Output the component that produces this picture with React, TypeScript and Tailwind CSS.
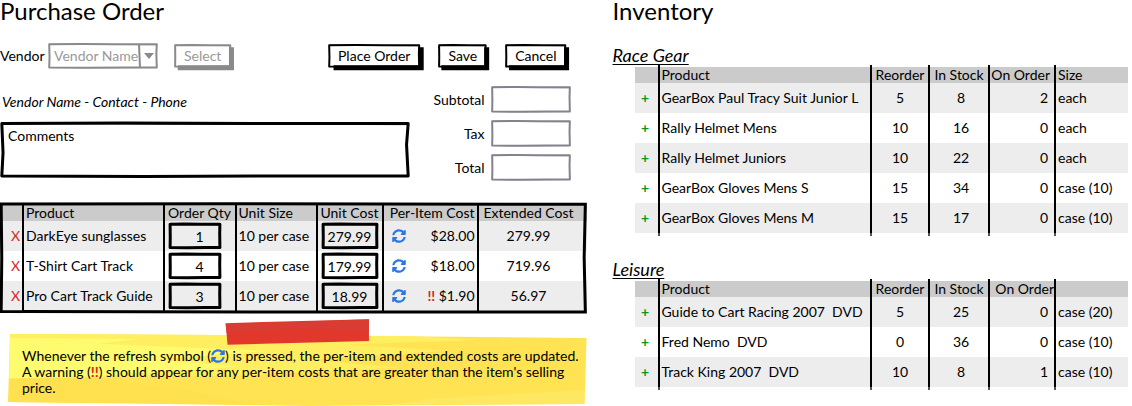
import type { ReactNode } from "react";
import { FaSyncAlt } from "react-icons/fa";

type FrameProps = { className?: string; width?: number; shadow?: boolean };

/* Hand-drawn rectangle that stretches over its positioned parent. */
function Frame({ className = "text-black", width = 2, shadow = false }: FrameProps) {
  return (
    <svg
      aria-hidden="true"
      viewBox="0 0 100 100"
      preserveAspectRatio="none"
      className={`pointer-events-none absolute inset-px h-[calc(100%-2px)] w-[calc(100%-2px)] overflow-visible ${className}`}
      fill="none"
      stroke="currentColor"
      strokeWidth={width}
      strokeLinejoin="round"
    >
      {shadow && (
        <path vectorEffect="non-scaling-stroke" strokeWidth="5" strokeLinejoin="miter" d="M102 10 L102 103 L5 103" />
      )}
      <path
        vectorEffect="non-scaling-stroke"
        d="M0.2 1 L30 0 L62 1 L99.8 1 L99.4 40 L99.8 98 L70 98 L35 99 L0.2 98 L0.5 55 Z"
      />
      <path vectorEffect="non-scaling-stroke" strokeWidth="1" d="M0.2 1 L45 2 L99.8 3 M0.3 98 L60 99 L99.8 98" />
    </svg>
  );
}

function SketchButton({ children, disabled = false }: { children: ReactNode; disabled?: boolean }) {
  return (
    <button
      type="button"
      disabled={disabled}
      className={`relative mr-1 h-6 px-2.5 text-sm leading-6 ${disabled ? "text-[#999]" : "text-black"}`}
    >
      <Frame shadow className={disabled ? "text-[#8a8a8a]" : "text-black"} />
      <span className="relative">{children}</span>
    </button>
  );
}

const orders = [
  { name: "DarkEye sunglasses", qty: "1", cost: "279.99", each: "$28.00", total: "279.99", warn: false },
  { name: "T-Shirt Cart Track", qty: "4", cost: "179.99", each: "$18.00", total: "719.96", warn: false },
  { name: "Pro Cart Track Guide", qty: "3", cost: "18.99", each: "$1.90", total: "56.97", warn: true },
];

type Item = [string, number, number, number, string];

const raceGear: Item[] = [
  ["GearBox Paul Tracy Suit Junior L", 5, 8, 2, "each"],
  ["Rally Helmet Mens", 10, 16, 0, "each"],
  ["Rally Helmet Juniors", 10, 22, 0, "each"],
  ["GearBox Gloves Mens S", 15, 34, 0, "case (10)"],
  ["GearBox Gloves Mens M", 15, 17, 0, "case (10)"],
];

const leisure: Item[] = [
  ["Guide to Cart Racing 2007  DVD", 5, 25, 0, "case (20)"],
  ["Fred Nemo  DVD", 0, 36, 0, "case (10)"],
  ["Track King 2007  DVD", 10, 8, 1, "case (10)"],
];

function CellInput({ label, value, className = "" }: { label: string; value: string; className?: string }) {
  return (
    <div className="relative h-[26px] w-full">
      <input
        aria-label={label}
        defaultValue={value}
        className={`block h-full w-full bg-transparent text-center outline-none ${className}`}
      />
      <Frame width={3} />
    </div>
  );
}

function OrderTable() {
  const line = "border-l-2 border-black";
  return (
    <div className="relative pt-0.5 pb-0.5">
      <table className="w-full table-fixed border-collapse whitespace-nowrap">
        <colgroup>
          <col className="w-[23px]" />
          <col />
          <col className="w-[72px]" />
          <col className="w-[81px]" />
          <col className="w-[66px]" />
          <col className="w-[95px]" />
          <col className="w-[109px]" />
        </colgroup>
        <thead>
          <tr className="h-4 bg-[#cbcbcb] leading-4">
            <td />
            <th className={`${line} pl-0.5 text-left font-normal`}>Product</th>
            <th className={`${line} font-normal`}>Order Qty</th>
            <th className={`${line} pl-0.5 text-left font-normal`}>Unit Size</th>
            <th className={`${line} font-normal`}>Unit Cost</th>
            <th className={`${line} pr-0.5 text-right font-normal`}>Per-Item Cost</th>
            <th className={`${line} pr-2 font-normal`}>Extended Cost</th>
          </tr>
        </thead>
        <tbody>
          {orders.map((o) => (
            <tr key={o.name} className="h-[30px] odd:bg-[#ededed]">
              <td className="pr-0.5 text-right">
                <button type="button" aria-label={`Remove ${o.name}`} className="text-[#d9251c]">
                  X
                </button>
              </td>
              <td className={`${line} pl-0.5`}>{o.name}</td>
              <td className={`${line} pr-3.5 pl-1`}>
                <CellInput label={`Order quantity for ${o.name}`} value={o.qty} className="pl-2.5" />
              </td>
              <td className={`${line} pl-0.5`}>10 per case</td>
              <td className={`${line} px-1`}>
                <CellInput label={`Unit cost of ${o.name}`} value={o.cost} />
              </td>
              <td className={`${line} pr-0.5 pl-2`}>
                <div className="flex items-center justify-between">
                  <button type="button" aria-label={`Refresh ${o.name}`} className="text-[#2b78e4]">
                    <FaSyncAlt size={14} />
                  </button>
                  <span>
                    {o.warn && <span className="font-bold text-[#d9251c]">!! </span>}
                    {o.each}
                  </span>
                </div>
              </td>
              <td className={`${line} pr-2 text-center`}>{o.total}</td>
            </tr>
          ))}
        </tbody>
      </table>
      <svg
        aria-hidden="true"
        viewBox="0 0 100 100"
        preserveAspectRatio="none"
        className="pointer-events-none absolute inset-0 h-full w-full overflow-visible"
        fill="none"
        stroke="#000"
        strokeWidth="3"
      >
        <path vectorEffect="non-scaling-stroke" d="M0.2 1 L40 0.6 L99.8 1.2 L99.6 50 L99.8 99 L50 99.2 L0.2 98.6 L0.3 50 Z" />
      </svg>
    </div>
  );
}

type InventoryProps = { items: Item[]; sizeHeading: string; orderedClass: string };

function InventoryTable({ items, sizeHeading, orderedClass }: InventoryProps) {
  const head =
    "relative border-l-2 border-black font-normal before:absolute before:-top-0.5 before:-left-0.5 before:h-0.5 before:w-0.5 before:bg-black";
  const cell =
    "relative border-l-2 border-black group-last:after:absolute group-last:after:-bottom-[3px] group-last:after:-left-0.5 group-last:after:h-[3px] group-last:after:w-0.5 group-last:after:bg-[#555]";
  return (
    <table className="w-full table-fixed border-separate border-spacing-0 whitespace-pre">
      <colgroup>
        <col className="w-[23px]" />
        <col />
        <col className="w-[58px]" />
        <col className="w-[60px]" />
        <col className="w-[66px]" />
        <col className="w-[74px]" />
      </colgroup>
      <thead>
        <tr className="h-4 bg-[#cbcbcb] leading-4">
          <td />
          <th className={`${head} pl-0.5 text-left`}>Product</th>
          <th className={head}>Reorder</th>
          <th className={head}>In Stock</th>
          <th className={`${head} text-right ${orderedClass}`}>On Order</th>
          <th className={`${head} pl-0.5 text-left`}>{sizeHeading}</th>
        </tr>
      </thead>
      <tbody>
        {items.map(([name, reorder, stock, ordered, size]) => (
          <tr key={name} className="group h-[30px] odd:bg-[#ededed]">
            <td className="pr-0.5 text-center">
              <button type="button" aria-label={`Add ${name}`} className="font-bold text-[#149414]">
                +
              </button>
            </td>
            <td className={`${cell} pl-0.5`}>{name}</td>
            <td className={`${cell} text-center`}>{reorder}</td>
            <td className={`${cell} pl-1 text-center`}>{stock}</td>
            <td className={`${cell} pr-1.5 text-right`}>{ordered}</td>
            <td className={`${cell} pl-0.5`}>{size}</td>
          </tr>
        ))}
      </tbody>
    </table>
  );
}

function AmountField({ id, label }: { id: string; label: string }) {
  return (
    <div className="flex items-center justify-end gap-1.5">
      <label htmlFor={id}>{label}</label>
      <div className="relative h-[27px] w-20">
        <input id={id} className="block h-full w-full bg-transparent px-2 outline-none" />
        <Frame className="text-[#84828e]" />
      </div>
    </div>
  );
}

function Note() {
  return (
    <div className="relative ml-2 pt-[15px] pr-0.5 pb-2.5 pl-3.5">
      <svg
        aria-hidden="true"
        viewBox="0 0 577 74"
        preserveAspectRatio="none"
        className="pointer-events-none absolute inset-0 h-full w-full overflow-visible"
      >
        <path d="M2 1 L217 2 L362 3 L577 5 L575 72 L300 74 L0 70 Z" fill="#ffe352" />
        <path d="M2 1 L217 2 L400 3 L470 7 L340 12 L440 18 L300 27 L390 35 L240 43 L2 46 Z" fill="#ffee60" />
        <path d="M2 5 L130 6 L90 11 L260 18 L150 27 L230 34 L100 43 L1 46 Z" fill="#fffb6e" />
        <path d="M3 46 L0 70 L240 72 L180 58 L90 47 Z" fill="#ffe04e" />
        <path d="M420 67 L575 58 L575 72 L380 73 Z" fill="#ffeb6d" opacity="0.6" />
        <path d="M217 -10 L360 -14 L360 8 L219 12 Z" fill="#e2382c" />
        <path d="M217 -9 L360 -14 L360 -2 L290 -4 L218 0 Z" fill="#d43e34" opacity="0.75" />
      </svg>
      <p className="relative leading-4">
        Whenever the refresh symbol (<FaSyncAlt size={14} className="inline align-[-2px] text-[#2b78e4]" />) is pressed,
        the per-item and extended costs are updated. A warning (
        <span className="font-bold text-[#d9251c]">!!</span>) should appear for any per-item costs that are greater than
        the item's selling price.
      </p>
    </div>
  );
}

export default function App() {
  return (
    <main className="grid grid-cols-[588fr_519fr] items-start gap-6 bg-white font-['Lato',sans-serif] text-sm leading-4 text-black">
      <section>
        <h1 className="text-2xl leading-[22px]">Purchase Order</h1>
        <div className="mt-[21px] flex items-center pr-[18px]">
          <label htmlFor="vendor" className="w-12">
            Vendor
          </label>
          <div className="relative h-[26px] w-[110px]">
            <select
              id="vendor"
              disabled
              className="block h-full w-full appearance-none bg-transparent pl-1.5 text-[#999] opacity-100 outline-none"
            >
              <option>Vendor Name</option>
            </select>
            <Frame className="text-[#8a8a8a]" />
            <svg
              aria-hidden="true"
              viewBox="0 0 20 26"
              className="pointer-events-none absolute top-0 right-0 h-[26px] w-5 text-[#8a8a8a]"
            >
              <path d="M1 1 L2 25" stroke="currentColor" strokeWidth="2" />
              <path d="M6 10 H16 L11 16 Z" fill="currentColor" />
            </svg>
          </div>
          <div className="ml-4">
            <SketchButton disabled>Select</SketchButton>
          </div>
          <div className="ml-auto flex gap-3.5">
            <SketchButton>Place Order</SketchButton>
            <SketchButton>Save</SketchButton>
            <SketchButton>Cancel</SketchButton>
          </div>
        </div>

        <div className="mt-[17px] flex items-start justify-between pr-[18px]">
          <div className="w-[410px] pt-2">
            <p className="pl-0.5 italic">Vendor Name - Contact - Phone</p>
            <div className="relative mt-3 h-14">
              <textarea
                aria-label="Comments"
                defaultValue="Comments"
                className="block h-full w-full resize-none bg-transparent px-2 py-1.5 outline-none"
              />
              <Frame width={3} />
            </div>
          </div>
          <div className="flex flex-col gap-[7px]">
            <AmountField id="subtotal" label="Subtotal" />
            <AmountField id="tax" label="Tax" />
            <AmountField id="total" label="Total" />
          </div>
        </div>

        <div className="mt-[22px] pr-0.5">
          <OrderTable />
        </div>
        <div className="mt-5 pr-0.5">
          <Note />
        </div>
      </section>

      <section>
        <h1 className="text-2xl leading-[22px]">Inventory</h1>
        <h2 className="mt-[25px] text-lg leading-4 italic underline decoration-1 underline-offset-2">Race Gear</h2>
        <div className="mt-1 pr-1 pl-[22px]">
          <InventoryTable items={raceGear} sizeHeading="Size" orderedClass="pr-1" />
        </div>
        <h2 className="mt-7 text-lg leading-4 italic underline decoration-1 underline-offset-2">Leisure</h2>
        <div className="mt-1 pr-1 pl-[22px]">
          <InventoryTable items={leisure} sizeHeading="" orderedClass="pr-0" />
        </div>
      </section>
    </main>
  );
}
